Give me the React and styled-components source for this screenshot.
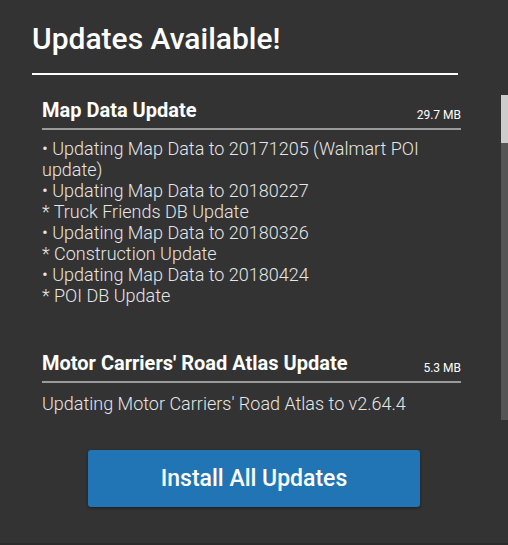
import React from "react";
import styled, { createGlobalStyle } from "styled-components";

const GlobalStyle = createGlobalStyle`
  html, body {
    margin: 0;
    padding: 0;
    background: #333333;
  }
  body {
    font-family: Roboto, "Liberation Sans", sans-serif;
  }
`;

const updates = [
  {
    name: "Map Data Update",
    size: "29.7 MB",
    spacing: 8,
    notes: [
      "• Updating Map Data to 20171205 (Walmart POI update)",
      "• Updating Map Data to 20180227",
      "* Truck Friends DB Update",
      "• Updating Map Data to 20180326",
      "* Construction Update",
      "• Updating Map Data to 20180424",
      "* POI DB Update",
    ],
  },
  {
    name: "Motor Carriers' Road Atlas Update",
    size: "5.3 MB",
    spacing: 10,
    notes: ["Updating Motor Carriers' Road Atlas to v2.64.4"],
  },
];

const App = () => {
  return (
    <>
      <GlobalStyle />
      <Screen>
        <Header>
          <Title>Updates Available!</Title>
        </Header>

        <ListArea>
          <List>
            {updates.map((u) => (
              <Section key={u.name}>
                <SectionHead>
                  <SectionName>{u.name}</SectionName>
                  <SectionSize>{u.size}</SectionSize>
                </SectionHead>
                <Notes $top={u.spacing}>
                  {u.notes.map((n) => (
                    <Note key={n}>{n}</Note>
                  ))}
                </Notes>
              </Section>
            ))}
          </List>
          <Track>
            <Thumb />
          </Track>
        </ListArea>

        <Footer>
          <InstallButton>Install All Updates</InstallButton>
        </Footer>
      </Screen>
    </>
  );
};

export default App;

const Screen = styled.div`
  height: 543px;
  background: #333333;
  border-bottom: 2px solid #2b2b2b;
  display: flex;
  flex-direction: column;
  overflow: hidden;
`;

const Header = styled.div`
  padding: 21px 50px 0 32px;
`;

const Title = styled.h1`
  margin: 0;
  font-size: 30px;
  line-height: 36px;
  font-weight: 500;
  color: #ffffff;
  padding-bottom: 16px;
  border-bottom: 2px solid #ffffff;
`;

const ListArea = styled.div`
  margin-top: 20px;
  height: 325px;
  display: flex;
`;

const List = styled.div`
  flex: 1;
  overflow: hidden;
  padding: 4px 40px 0 42px;
`;

const Section = styled.div`
  margin-bottom: 46px;
`;

const SectionHead = styled.div`
  display: flex;
  justify-content: space-between;
  align-items: flex-end;
  padding-bottom: 7px;
  border-bottom: 2px solid #9a9a9a;
`;

const SectionName = styled.div`
  font-size: 20px;
  line-height: 22px;
  font-weight: 700;
  color: #ffffff;
`;

const SectionSize = styled.div`
  font-size: 12px;
  line-height: 14px;
  color: #ffffff;
  margin-bottom: -1px;
`;

const Notes = styled.div`
  margin-top: ${(p) => p.$top}px;
`;

const Note = styled.div`
  font-size: 18px;
  line-height: 21px;
  font-weight: 300;
  color: #e6e6e6;
`;

const Track = styled.div`
  width: 7px;
  background: #555555;
`;

const Thumb = styled.div`
  height: 48px;
  background: #cccccc;
`;

const Footer = styled.div`
  display: flex;
  justify-content: center;
  padding-top: 30px;
`;

const InstallButton = styled.button`
  width: 332px;
  height: 57px;
  border: none;
  border-radius: 3px;
  background: #2275b5;
  box-shadow: 0 1px 3px rgba(0, 0, 0, 0.45);
  color: #ffffff;
  font-family: Roboto, "Liberation Sans", sans-serif;
  font-size: 23px;
  font-weight: 500;
  cursor: pointer;
`;
